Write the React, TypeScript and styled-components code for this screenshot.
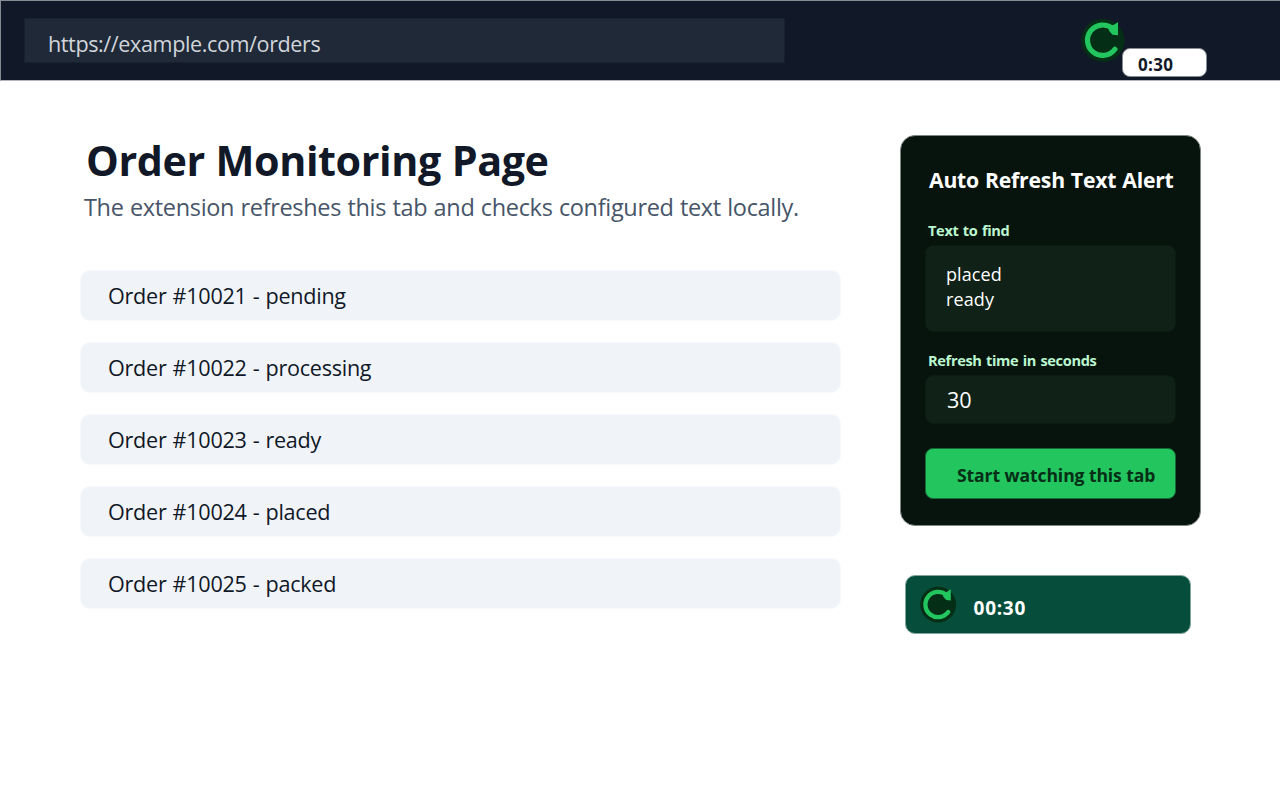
import React from 'react';
import styled, { createGlobalStyle } from 'styled-components';

const GlobalStyle = createGlobalStyle`
  *, *::before, *::after { box-sizing: border-box; }
  body {
    margin: 0;
    background: #ffffff;
    font-family: "Open Sans", "Noto Sans", sans-serif;
    color: #111827;
  }
  h1, h2, p, ul { margin: 0; padding: 0; font-weight: inherit; }
`;

const Page = styled.div`
  width: 1280px;
  height: 800px;
  overflow: hidden;
`;

const TopBar = styled.header`
  display: flex;
  align-items: flex-start;
  height: 81px;
  padding: 17px 73px 0 23px;
  background: #111827;
  border: 1px solid #858b92;
  border-right: 0;
  border-bottom-color: #b8b5be;
`;

const AddressBar = styled.div`
  width: 761px;
  height: 45px;
  padding: 2px 23px 0;
  border: 1px solid #18212f;
  background: #1f2937;
  color: #d1d5db;
  font-size: 21.6px;
  line-height: 45px;
  letter-spacing: -0.41px;
`;

const ToolbarAction = styled.div`
  position: relative;
  width: 126px;
  height: 60px;
  margin-left: auto;
`;

const CountPill = styled.span`
  position: absolute;
  right: 0;
  bottom: 1px;
  width: 85px;
  height: 29px;
  padding: 2px 0 0 15px;
  border: 1px solid #888c93;
  border-radius: 8px;
  background: #ffffff;
  font-size: 17px;
  font-weight: 700;
  line-height: 27px;
  letter-spacing: 0.35px;
`;

const Content = styled.div`
  display: flex;
  align-items: flex-start;
  gap: 59px;
  padding: 54px 0 0 80px;
`;

const Main = styled.main`
  width: 761px;
`;

const Title = styled.h1`
  padding-left: 6px;
  font-size: 41.3px;
  font-weight: 700;
  line-height: 50px;
  letter-spacing: -0.44px;
  word-spacing: 0.6px;
`;

const Subtitle = styled.p`
  margin-top: 7px;
  padding-left: 4px;
  color: #475569;
  font-size: 23.5px;
  line-height: 30px;
  letter-spacing: -0.33px;
  word-spacing: 0.6px;
`;

const OrderList = styled.ul`
  display: flex;
  flex-direction: column;
  gap: 21px;
  margin-top: 48px;
  list-style: none;
`;

const OrderRow = styled.li`
  height: 51px;
  padding-left: 27px;
  border: 1px solid #f7f9fc;
  border-radius: 10px;
  background: #f0f4f9;
  font-size: 21.6px;
  line-height: 49px;
  letter-spacing: -0.26px;
  word-spacing: 0.7px;
`;

const Side = styled.aside`
  display: flex;
  flex-direction: column;
`;

const Panel = styled.section`
  width: 301px;
  height: 391px;
  padding: 29px 24px 0;
  border: 1px solid #7f8783;
  border-radius: 15px;
  background: #07130d;
`;

const PanelTitle = styled.h2`
  padding-left: 4px;
  color: #ffffff;
  font-size: 21.2px;
  font-weight: 700;
  line-height: 30px;
  letter-spacing: -0.21px;
  word-spacing: 0.7px;
  white-space: nowrap;
`;

const Label = styled.div<{ $gap: number }>`
  margin-top: ${(p) => p.$gap}px;
  padding-left: 3px;
  color: #bbf7d0;
  font-size: 14.6px;
  font-weight: 700;
  line-height: 20px;
  letter-spacing: -0.34px;
  word-spacing: 0.9px;
`;

const Field = styled.div<{ $height: number; $multiline?: boolean }>`
  width: 251px;
  height: ${(p) => p.$height}px;
  margin-top: 5px;
  padding: ${(p) => (p.$multiline ? '16px 20px' : '0 21px')};
  border: 1px solid #0c1b12;
  border-radius: 8px;
  background: #102217;
  color: #ffffff;
  font-size: ${(p) => (p.$multiline ? 18 : 21.6)}px;
  line-height: ${(p) => (p.$multiline ? 25 : p.$height - 2)}px;
  letter-spacing: ${(p) => (p.$multiline ? 0.1 : -0.2)}px;
  white-space: pre-line;
`;

const StartButton = styled.button`
  display: block;
  width: 251px;
  height: 51px;
  margin-top: 24px;
  padding: 3px 0 0 31px;
  border: 1px solid #156c36;
  border-radius: 8px;
  background: #22c55e;
  color: #052e16;
  font: 700 17.6px/46px "Open Sans", sans-serif;
  letter-spacing: -0.11px;
  text-align: left;
  white-space: nowrap;
`;

const TimerBadge = styled.div`
  display: flex;
  align-items: flex-start;
  width: 286px;
  height: 59px;
  margin: 49px 0 0 5px;
  padding: 10px 14px;
  border: 1px solid #82a69d;
  border-radius: 10px;
  background: #064e3b;
`;

const TimerText = styled.span`
  margin: 9px 0 0 17px;
  color: #ffffff;
  font-size: 19px;
  font-weight: 700;
  line-height: 26px;
  letter-spacing: 0.7px;
`;

const IconSvg = styled.svg`
  flex: none;
`;

const RefreshIcon = ({ size }: { size: number }) => (
  <IconSvg width={size} height={size} viewBox="0 0 44 44">
    <circle cx="21.8" cy="22.4" r="21.6" fill="#052e16" />
    <path
      d="M31.5 10.6 A15.2 15.2 0 1 0 33.9 31.3"
      fill="none"
      stroke="#22c55e"
      strokeWidth="5.2"
      strokeLinecap="round"
    />
    <path d="M37 4 V17.3 L31.5 16.8 L27.6 12.2 L29.5 7.9 Q32.5 7.5 37 4 Z" fill="#22c55e" />
  </IconSvg>
);

const orders = [
  { id: 10021, status: 'pending' },
  { id: 10022, status: 'processing' },
  { id: 10023, status: 'ready' },
  { id: 10024, status: 'placed' },
  { id: 10025, status: 'packed' },
];

export default function App() {
  return (
    <Page>
      <GlobalStyle />
      <TopBar>
        <AddressBar>https://example.com/orders</AddressBar>
        <ToolbarAction>
          <RefreshIcon size={44} />
          <CountPill>0:30</CountPill>
        </ToolbarAction>
      </TopBar>
      <Content>
        <Main>
          <Title>Order Monitoring Page</Title>
          <Subtitle>The extension refreshes this tab and checks configured text locally.</Subtitle>
          <OrderList>
            {orders.map((o) => (
              <OrderRow key={o.id}>{`Order #${o.id} - ${o.status}`}</OrderRow>
            ))}
          </OrderList>
        </Main>
        <Side>
          <Panel>
            <PanelTitle>Auto Refresh Text Alert</PanelTitle>
            <Label $gap={25}>Text to find</Label>
            <Field $height={87} $multiline>{'placed\nready'}</Field>
            <Label $gap={18}>Refresh time in seconds</Label>
            <Field $height={49}>30</Field>
            <StartButton>Start watching this tab</StartButton>
          </Panel>
          <TimerBadge>
            <RefreshIcon size={36.6} />
            <TimerText>00:30</TimerText>
          </TimerBadge>
        </Side>
      </Content>
    </Page>
  );
}
